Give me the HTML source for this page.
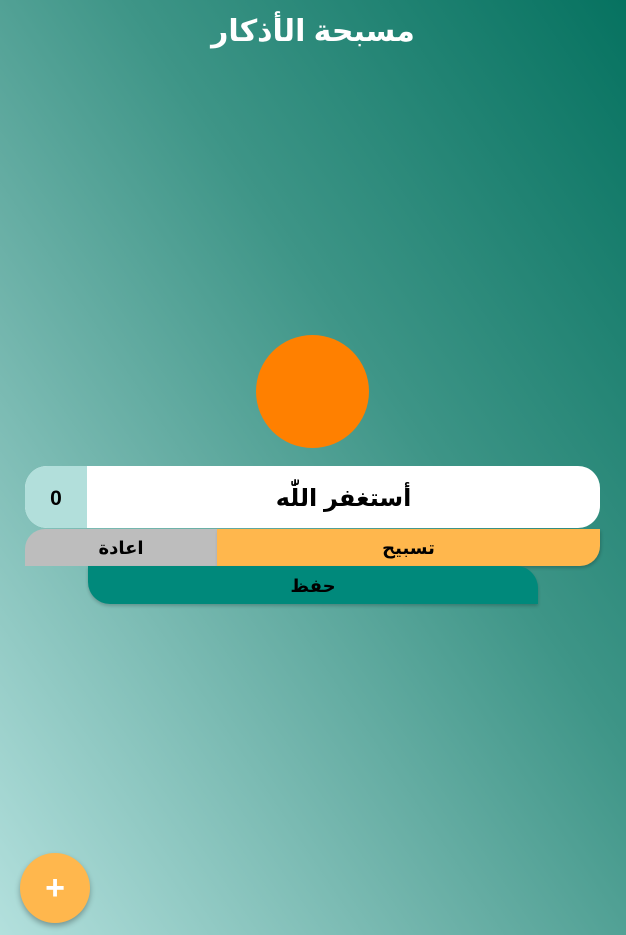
<!DOCTYPE html>
<html><head><meta charset="utf-8"><style>
html,body{margin:0;padding:0;width:626px;height:935px;overflow:hidden}
body{background:linear-gradient(to top right,#b3e0dd 0%,#6fb3aa 35%,#3e9587 60%,#067260 100%);font-family:"Liberation Sans","Noto Sans CJK SC","DejaVu Sans",sans-serif;position:relative}
.t{position:absolute;top:14px;left:0;width:626px;text-align:center;color:#fff;font-size:30px;font-weight:bold;letter-spacing:1px}
.c{position:absolute;left:256px;top:335px;width:113px;height:113px;border-radius:50%;background:#ff8000}
.r1{position:absolute;left:25px;top:466px;width:575px;height:62px;border-radius:22px;overflow:hidden;background:#fff;display:flex}
.cnt{width:62px;background:#b2dfdb;display:flex;align-items:center;justify-content:center;font-size:21px;font-weight:bold;padding-top:3px}
.txt{flex:1;display:flex;align-items:center;justify-content:center;font-size:24px;font-weight:bold;direction:rtl;padding-top:3px}
.g{position:absolute;left:25px;top:529px;width:192px;height:37px;background:#bdbdbd;border-top-left-radius:20px;display:flex;align-items:center;justify-content:center;font-size:18px;font-weight:bold;padding-top:2px;box-sizing:border-box}
.o{position:absolute;left:217px;top:529px;width:383px;height:37px;background:#ffb74d;border-bottom-right-radius:20px;display:flex;align-items:center;justify-content:center;font-size:18px;font-weight:bold;box-shadow:1px 2px 3px rgba(0,0,0,.2);padding-top:2px;box-sizing:border-box}
.s{position:absolute;left:88px;top:566px;width:450px;height:38px;background:#00897b;border-top-right-radius:22px;border-bottom-left-radius:22px;display:flex;align-items:center;justify-content:center;font-size:18px;font-weight:bold;box-shadow:0 2px 3px rgba(0,0,0,.2);padding-top:2px;box-sizing:border-box}
.f{position:absolute;left:20px;top:853px;width:70px;height:70px;border-radius:50%;background:#ffb74d;box-shadow:0 3px 6px rgba(0,0,0,.3);color:#fff;font-size:34px;line-height:70px;text-align:center;font-weight:bold}
</style></head><body>
<div class="t">مسبحة الأذكار</div>
<div class="c"></div>
<div class="r1"><div class="cnt">0</div><div class="txt">أستغفر اللّٰه</div></div>
<div class="g">اعادة</div>
<div class="o">تسبيح</div>
<div class="s">حفظ</div>
<div class="f">+</div>
</body></html>
